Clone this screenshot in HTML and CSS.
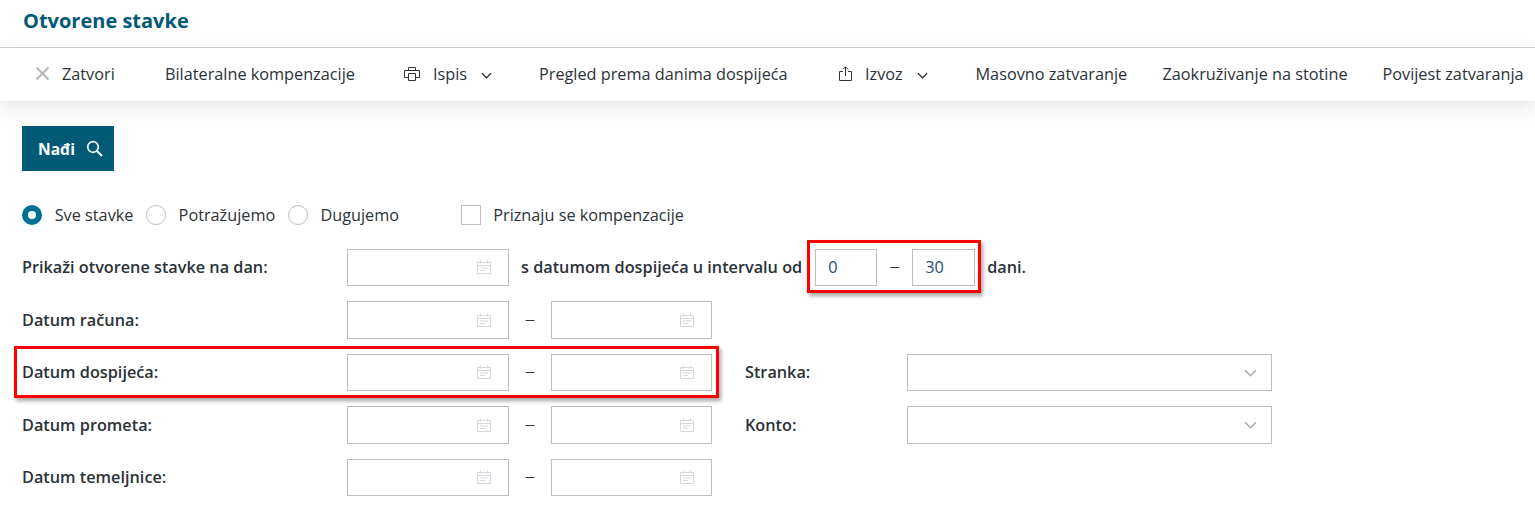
FILE: index.html
```html
<!DOCTYPE html>
<html lang="hr">
<head>
<meta charset="utf-8">
<title>Otvorene stavke</title>
<link rel="stylesheet" href="styles.css">
</head>
<body>
<svg class="defs" width="0" height="0" aria-hidden="true">
  <symbol id="cal" viewBox="0 0 14 14">
    <path d="M.5 2.500h13v11H.5zM.5 5.500h13M3.500.5v3M10.500.5v3" fill="none" stroke="#d3d8dd"/>
    <path d="M3 8h8M3 10.500h5" fill="none" stroke="#d3d8dd"/>
  </symbol>
  <symbol id="chev" viewBox="0 0 12 7">
    <path d="M1 1l5 5 5-5" fill="none" stroke="currentColor" stroke-width="1.400"/>
  </symbol>
</svg>
<header class="titlebar"><h1 class="title">Otvorene stavke</h1></header>
<nav class="toolbar">
  <span class="tool tool-close">
    <svg class="ico-x" width="15" height="15" viewBox="0 0 15 15"><path d="M1.500 1.500l12 12M13.500 1.500l-12 12" stroke="#b4b4b4" stroke-width="2" fill="none"/></svg>
    Zatvori
  </span>
  <span class="tool tool-bil">Bilateralne kompenzacije</span>
  <span class="tool tool-ispis">
    <svg width="16" height="14" viewBox="0 0 16 14"><path d="M4.500 3.500v-3h7v3M4.500 10.500h-4v-7h15v7h-4M4.500 6.500h7v7h-7z" fill="none" stroke="#333"/></svg>
    <span class="tool-label">Ispis</span>
    <svg class="chev" width="11" height="7"><use href="#chev"/></svg>
  </span>
  <span class="tool tool-pregled">Pregled prema danima dospijeća</span>
  <span class="tool tool-izvoz">
    <svg width="13" height="15" viewBox="0 0 13 15"><path d="M4 5.500H.5v9h12v-9H9M6.500 10V1M3.800 3.500L6.500.8l2.700 2.700" fill="none" stroke="#333"/></svg>
    <span class="tool-label">Izvoz</span>
    <svg class="chev" width="11" height="7"><use href="#chev"/></svg>
  </span>
  <span class="tool tool-mas">Masovno zatvaranje</span>
  <span class="tool tool-zao">Zaokruživanje na stotine</span>
  <span class="tool">Povijest zatvaranja</span>
</nav>
<main class="content">
  <button class="find" type="button">Nađi
    <svg width="17" height="17" viewBox="0 0 17 17"><circle cx="7" cy="7" r="5.300" fill="none" stroke="#fff" stroke-width="1.700"/><path d="M11 11l5 5" stroke="#fff" stroke-width="1.900"/></svg>
  </button>
  <div class="options">
    <span class="radio radio-on"></span><span class="opt">Sve stavke</span>
    <span class="radio"></span><span class="opt">Potražujemo</span>
    <span class="radio"></span><span class="opt">Dugujemo</span>
    <span class="check"></span><span class="opt">Priznaju se kompenzacije</span>
  </div>
  <div class="rows">
    <div class="row">
      <label class="lbl">Prikaži otvorene stavke na dan:</label>
      <div class="field date"><svg class="cal"><use href="#cal"/></svg></div>
      <span class="mid">s datumom dospijeća u intervalu od</span>
      <div class="field num num-a">0</div>
      <span class="dash dash-num">–</span>
      <div class="field num num-b">30</div>
      <span class="mid mid-end">dani.</span>
    </div>
    <div class="row">
      <label class="lbl">Datum računa:</label>
      <div class="field date"><svg class="cal"><use href="#cal"/></svg></div>
      <span class="dash">–</span>
      <div class="field date date2"><svg class="cal"><use href="#cal"/></svg></div>
    </div>
    <div class="row">
      <label class="lbl">Datum dospijeća:</label>
      <div class="field date"><svg class="cal"><use href="#cal"/></svg></div>
      <span class="dash">–</span>
      <div class="field date date2"><svg class="cal"><use href="#cal"/></svg></div>
      <label class="lbl lbl2">Stranka:</label>
      <div class="field select"><svg class="sel-chev" width="13" height="8"><use href="#chev"/></svg></div>
    </div>
    <div class="row">
      <label class="lbl">Datum prometa:</label>
      <div class="field date"><svg class="cal"><use href="#cal"/></svg></div>
      <span class="dash">–</span>
      <div class="field date date2"><svg class="cal"><use href="#cal"/></svg></div>
      <label class="lbl lbl2">Konto:</label>
      <div class="field select"><svg class="sel-chev" width="13" height="8"><use href="#chev"/></svg></div>
    </div>
    <div class="row">
      <label class="lbl">Datum temeljnice:</label>
      <div class="field date"><svg class="cal"><use href="#cal"/></svg></div>
      <span class="dash">–</span>
      <div class="field date date2"><svg class="cal"><use href="#cal"/></svg></div>
    </div>
  </div>
</main>
<div class="mark mark-interval"></div>
<div class="mark mark-due"></div>
</body>
</html>
```
FILE: styles.css
```css
* { box-sizing: border-box; }
html, body { margin: 0; height: 512px; overflow: hidden; background: #fff; }
body { font-family: "Open Sans", sans-serif; font-size: 16.250px; color: #2b3238; position: relative; }
.defs { position: absolute; }
.titlebar { height: 48px; border-bottom: 1px solid #d4d4d4; padding: 7px 0 0 23px; }
.title { margin: 0; font-size: 20px; line-height: 27px; font-weight: 700; color: #005a75; }
.toolbar { height: 53px; display: flex; align-items: center; padding: 0 0 2px 35px; box-shadow: 0 6px 20px rgba(0,0,0,.11); background: #fff; position: relative; white-space: nowrap; }
.tool { display: flex; align-items: center; }
.ico-x { margin-right: 12px; }
.tool-close { width: 130px; }
.tool-bil { width: 239px; }
.tool-ispis { width: 135px; }
.tool-label { margin-left: 13px; }
.chev { margin-left: 14px; color: #333; margin-top: 3px; }
.tool-pregled { width: 300px; }
.tool-izvoz { width: 136.500px; }
.tool-mas { width: 187px; }
.tool-zao { width: 220px; }
.content { padding: 25px 0 0 22px; }
.find { display: flex; align-items: center; gap: 11px; width: 92px; height: 45px; padding: 0 0 0 16px; border: 0; background: #005a75; color: #fff; font: 700 15.600px "Open Sans", sans-serif; }
.options { display: flex; align-items: center; height: 20px; margin-top: 34px; }
.radio { width: 20px; height: 20px; border-radius: 50%; border: 1px solid #bdbdbd; flex: none; }
.radio-on { border: 6px solid #00708f; background: #fff; }
.opt { margin: 0 12.500px 0 12.700px; }
.check { width: 20px; height: 20px; border: 1px solid #bdbdbd; margin-left: 49px; flex: none; }
.rows { display: flex; flex-direction: column; gap: 15px; margin-top: 23.750px; }
.row { display: flex; align-items: center; height: 37.500px; }
.lbl { width: 325px; font-weight: 600; flex: none; padding-bottom: 1px; }
.lbl2 { width: 162px; margin-left: 33px; }
.field { height: 100%; border: 1px solid #bdbdbd; flex: none; display: flex; align-items: center; }
.date { width: 162px; justify-content: flex-end; padding-right: 17px; }
.date2 { width: 161px; }
.cal { width: 14px; height: 14px; margin-bottom: 1px; }
.dash { width: 42px; text-align: center; flex: none; font-size: 21px; font-weight: 300; line-height: 1; padding-bottom: 4px; }
.dash-num { width: 35px; }
.mid { font-weight: 600; margin-left: 12px; white-space: nowrap; padding-bottom: 1px; }
.mid-end { margin-left: 12px; }
.num { padding: 0 0 1px 12px; color: #1d4f78; margin-left: 13px; }
.num-a { width: 62px; }
.num-b { width: 63px; margin-left: 0; }
.select { width: 365px; justify-content: flex-end; padding-right: 14px; color: #a8a8a8; }
.mark { position: absolute; border: 3px solid #f00; box-shadow: 2px 3px 4px rgba(0,0,0,.35); }
.mark-interval { left: 807px; top: 240px; width: 174px; height: 53px; }
.mark-due { left: 14px; top: 346px; width: 705px; height: 52px; }
```
